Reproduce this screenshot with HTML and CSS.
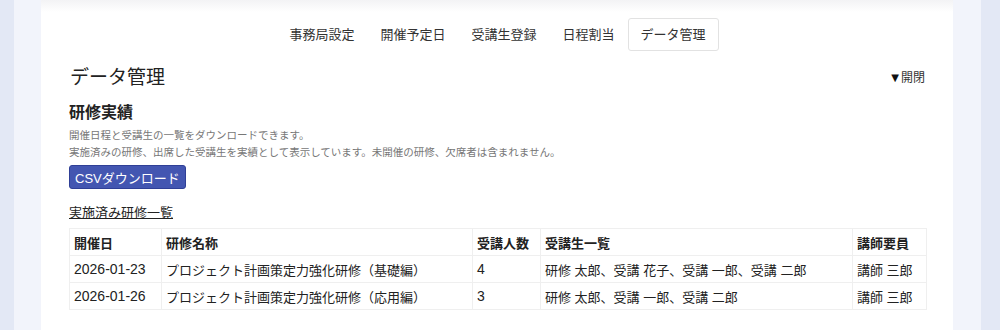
FILE: index.html
```html
<!DOCTYPE html>
<html lang="ja">
<head>
  <meta charset="UTF-8">
  <title>データ管理</title>
  <link rel="stylesheet" href="styles.css">
</head>
<body>

  <div class="shell">
    <div class="panel">

      <!-- Tabs -->
      <nav class="tabs">
        <a class="tab">事務局設定</a>
        <a class="tab">開催予定日</a>
        <a class="tab">受講生登録</a>
        <a class="tab">日程割当</a>
        <a class="tab active">データ管理</a>
      </nav>

      <div class="head">
        <h2>データ管理</h2>
        <span class="toggle"><span class="arrow">▼</span>開閉</span>
      </div>

      <h3>研修実績</h3>
      <p class="note">開催日程と受講生の一覧をダウンロードできます。<br>実施済みの研修、出席した受講生を実績として表示しています。未開催の研修、欠席者は含まれません。</p>

      <button class="btn">CSVダウンロード</button>

      <div class="sub">実施済み研修一覧</div>

      <table>
        <thead>
          <tr>
            <th class="c-date">開催日</th>
            <th class="c-name">研修名称</th>
            <th class="c-num">受講人数</th>
            <th class="c-list">受講生一覧</th>
            <th class="c-tutor">講師要員</th>
          </tr>
        </thead>
        <tbody>
          <tr>
            <td class="num">2026-01-23</td>
            <td>プロジェクト計画策定力強化研修（基礎編）</td>
            <td class="num">4</td>
            <td>研修 太郎、受講 花子、受講 一郎、受講 二郎</td>
            <td>講師 三郎</td>
          </tr>
          <tr>
            <td class="num">2026-01-26</td>
            <td>プロジェクト計画策定力強化研修（応用編）</td>
            <td class="num">3</td>
            <td>研修 太郎、受講 一郎、受講 二郎</td>
            <td>講師 三郎</td>
          </tr>
        </tbody>
      </table>

    </div>
  </div>

</body>
</html>
```

FILE: styles.css
```css
body {
  margin: 0;
  background: #e3e8f5;
  font-family: "Liberation Sans", "Noto Sans CJK JP", sans-serif;
  color: #222;
  height: 330px;
  overflow: hidden;
}

.shell {
  margin: 0 19px 0 14px;
  padding: 0 28px 0 27px;
  background: #f2f4fb;
  height: 330px;
}

.panel {
  background: linear-gradient(#f3f3f5, #ffffff 12px);
  height: 330px;
  padding: 18px 27px 0 28px;
  box-sizing: border-box;
}

.tabs {
  display: flex;
  justify-content: center;
}

.tab {
  font-size: 13px;
  color: #333;
  height: 33px;
  line-height: 31px;
  padding: 0 12px;
  border: 1px solid transparent;
  border-radius: 3px;
  box-sizing: border-box;
}

.tab.active {
  border-color: #e2e2e2;
  background: #fff;
}

.head {
  display: flex;
  justify-content: space-between;
  align-items: center;
  margin-top: 14px;
}

h2 {
  font-size: 19px;
  font-weight: normal;
  margin: 0;
  line-height: 26px;
  padding-left: 1px;
}

.toggle {
  font-size: 12px;
  color: #333;
  margin-right: 1px;
  line-height: 16px;
}

.arrow {
  font-family: "DejaVu Sans", sans-serif;
  font-size: 10px;
  color: #111;
  margin-right: 2px;
  vertical-align: 1px;
}

h3 {
  font-size: 16px;
  margin: 11px 0 0;
  line-height: 22px;
}

.note {
  font-size: 10.5px;
  color: #777;
  line-height: 17px;
  margin: 3px 0 0;
}

.btn {
  margin-top: 4px;
  display: block;
  font-family: inherit;
  font-size: 13px;
  color: #fff;
  background: #4356b1;
  border: 1px solid #2f3f96;
  border-radius: 3px;
  height: 24px;
  padding: 0 5px;
}

.sub {
  font-size: 13px;
  text-decoration: underline;
  margin-top: 15px;
  line-height: 18px;
}

table {
  margin-top: 6px;
  border-collapse: collapse;
  table-layout: fixed;
  width: 857px;
  font-size: 13px;
}

th, td {
  border: 1px solid #efefef;
  height: 27px;
  padding: 0 4px;
  text-align: left;
  box-sizing: border-box;
}

th {
  font-weight: bold;
}

.num {
  font-size: 14px;
}

.c-date { width: 92px; }
.c-name { width: 311px; }
.c-num { width: 68px; }
.c-list { width: 312px; }
.c-tutor { width: 74px; }
```
